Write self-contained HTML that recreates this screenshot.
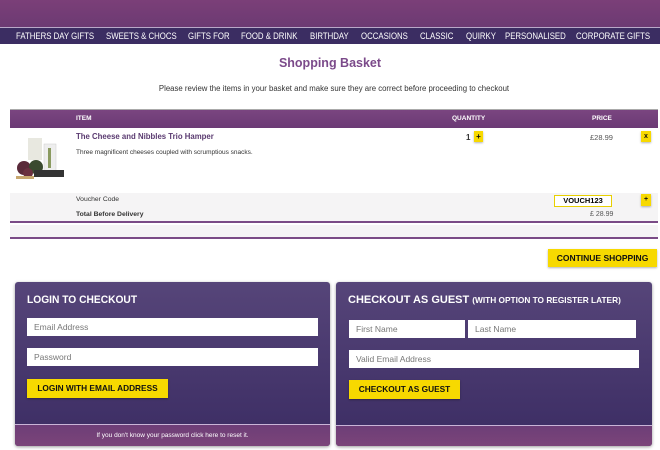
<!DOCTYPE html>
<html><head><style>
*{margin:0;padding:0;box-sizing:border-box}
body{width:660px;height:450px;background:#fff;font-family:"Liberation Sans",sans-serif;position:relative;overflow:hidden}
.a{position:absolute}
.hdr{left:0;top:0;width:660px;height:27px;background:linear-gradient(#7b3f78,#6c3a73)}
.nav{left:0;top:27px;width:660px;height:17px;background:#3b2d62;border-top:1px solid #b9a8c9;color:#fff;font-size:9.3px;line-height:16px;white-space:nowrap}
.nav span{position:absolute;top:0;transform:scaleX(0.84);transform-origin:left}
.t{font-size:8px;color:#333}
.yb{background:#f7d900;color:#111;font-weight:bold;text-align:center;box-shadow:0 1px 2px rgba(0,0,0,.3)}
.panel{background:linear-gradient(#564579,#3b2c63);border-radius:3px;box-shadow:0 1px 3px rgba(0,0,0,.4)}
.pf{background:linear-gradient(#6d3e78,#7b4479);border-top:1px solid #c9b4d7}
.in{background:#fff;color:#777;font-size:8.5px;line-height:18px;padding-left:7px;height:18px}
</style></head><body>
<div class="a hdr"></div>
<div class="a nav">
<span style="left:16px">FATHERS DAY GIFTS</span><span style="left:106px">SWEETS &amp; CHOCS</span><span style="left:188px">GIFTS FOR</span><span style="left:241px">FOOD &amp; DRINK</span><span style="left:310px">BIRTHDAY</span><span style="left:361px">OCCASIONS</span><span style="left:420px">CLASSIC</span><span style="left:466px">QUIRKY</span><span style="left:505px">PERSONALISED</span><span style="left:576px">CORPORATE GIFTS</span>
</div>
<div class="a" style="left:0;width:660px;top:56px;text-align:center;color:#7b4a8a;font-weight:bold;font-size:12.5px">Shopping Basket</div>
<div class="a t" style="left:0;width:668px;top:84px;text-align:center;font-size:7.8px">Please review the items in your basket and make sure they are correct before proceeding to checkout</div>
<div class="a" style="left:10px;top:109px;width:648px;height:19px;background:linear-gradient(#7a4580,#6b3a75);border-top:1px solid #aaa;color:#fff;font-size:6.5px;font-weight:bold;line-height:18px">
<span class="a" style="left:66px">ITEM</span><span class="a" style="left:442px">QUANTITY</span><span class="a" style="left:582px">PRICE</span></div>
<svg class="a" style="left:14px;top:136px" width="54" height="46">
<rect x="14" y="2" width="14" height="22" fill="#e8e8e0"/><rect x="30" y="8" width="12" height="28" fill="#eee" stroke="#ccc" stroke-width=".5"/>
<rect x="34" y="12" width="3" height="20" fill="#8a9a60"/>
<circle cx="10" cy="32" r="7" fill="#5a2a3a"/><circle cx="22" cy="31" r="7" fill="#3a4a30"/><circle cx="14" cy="37" r="5" fill="#6a3040"/>
<rect x="20" y="34" width="30" height="7" fill="#333"/><rect x="2" y="40" width="18" height="3" fill="#c8a870"/>
</svg>
<div class="a" style="left:76px;top:132px;font-size:7.8px;color:#5a3a70;font-weight:bold">The Cheese and Nibbles Trio Hamper</div>
<div class="a t" style="left:76px;top:149px;font-size:6.5px">Three magnificent cheeses coupled with scrumptious snacks.</div>
<div class="a t" style="left:466px;top:133px;font-weight:bold">1</div>
<div class="a yb" style="left:474px;top:131px;width:9px;height:11px;font-size:8px;line-height:11px">+</div>
<div class="a t" style="left:590px;top:133px;color:#555;font-size:7.5px">£28.99</div>
<div class="a yb" style="left:641px;top:131px;width:10px;height:11px;font-size:7px;line-height:11px">x</div>
<div class="a" style="left:10px;top:193px;width:648px;height:30px;background:#f5f4f5;border-bottom:2px solid #7a4b86"></div>
<div class="a t" style="left:76px;top:196px;font-size:6.8px">Voucher Code</div>
<div class="a t" style="left:76px;top:211px;font-size:6.8px;font-weight:bold">Total Before Delivery</div>
<div class="a" style="left:554px;top:195px;width:58px;height:12px;background:#fff;border:1px solid #e8d000;font-size:7.5px;font-weight:bold;text-align:center;line-height:10px">VOUCH123</div>
<div class="a yb" style="left:641px;top:194px;width:10px;height:12px;font-size:7px;line-height:12px">+</div>
<div class="a t" style="left:590px;top:211px;color:#555;font-size:7px">£ 28.99</div>
<div class="a" style="left:10px;top:225px;width:648px;height:14px;background:#f5f4f5;border-bottom:2px solid #7a4b86"></div>
<div class="a yb" style="left:548px;top:249px;width:109px;height:18px;font-size:8.5px;line-height:18px">CONTINUE SHOPPING</div>

<div class="a panel" style="left:15px;top:282px;width:315px;height:164px"></div>
<div class="a pf" style="left:15px;top:424px;width:315px;height:22px;border-radius:0 0 3px 3px;color:#fff;font-size:6.5px;text-align:center;line-height:21px">If you don't know your password click here to reset it.</div>
<div class="a" style="left:27px;top:294px;color:#fff;font-weight:bold;font-size:11px;transform:scaleX(0.93);transform-origin:left">LOGIN TO CHECKOUT</div>
<div class="a in" style="left:27px;top:318px;width:291px">Email Address</div>
<div class="a in" style="left:27px;top:348px;width:291px">Password</div>
<div class="a yb" style="left:27px;top:379px;width:141px;height:19px;font-size:8.3px;line-height:19px">LOGIN WITH EMAIL ADDRESS</div>

<div class="a panel" style="left:336px;top:282px;width:316px;height:164px"></div>
<div class="a pf" style="left:336px;top:425px;width:316px;height:21px;border-radius:0 0 3px 3px"></div>
<div class="a" style="left:348px;top:294px;color:#fff;font-weight:bold;font-size:11px;white-space:nowrap">CHECKOUT AS GUEST <span style="font-size:8.3px">(WITH OPTION TO REGISTER LATER)</span></div>
<div class="a in" style="left:349px;top:320px;width:116px">First Name</div>
<div class="a in" style="left:468px;top:320px;width:168px">Last Name</div>
<div class="a in" style="left:349px;top:350px;width:290px">Valid Email Address</div>
<div class="a yb" style="left:349px;top:380px;width:111px;height:19px;font-size:8.3px;line-height:19px">CHECKOUT AS GUEST</div>
</body></html>
